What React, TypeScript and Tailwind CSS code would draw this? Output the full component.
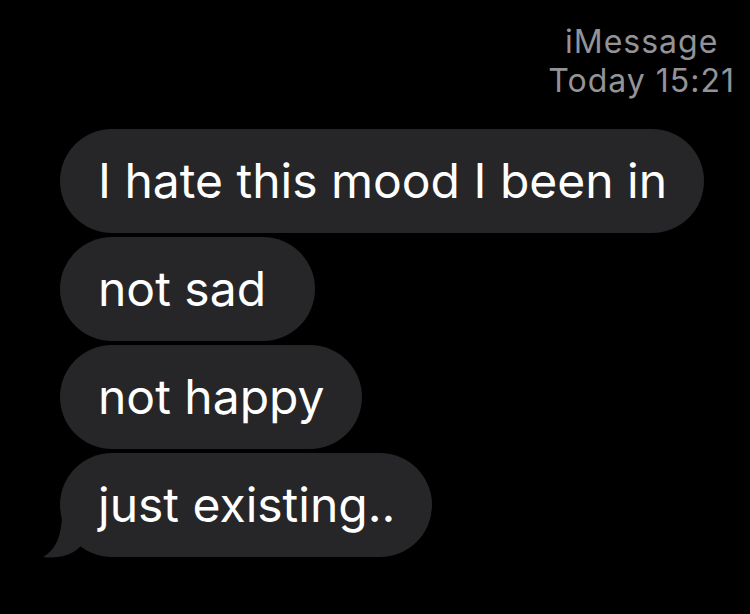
import React from 'react';

const messages = ['I hate this mood I been in', 'not sad', 'not happy', 'just existing..'];

function Tail() {
  return (
    <svg
      className="absolute left-0 top-0 overflow-visible"
      width="1"
      height="1"
      viewBox="0 0 1 1"
    >
      <path d="M2 60 C2 82 -4 97 -17 104 C-2 106 12 102 20 94 L52 53 Z" fill="#262628" />
    </svg>
  );
}

export default function App() {
  return (
    <div className="w-[750px] h-[614px] bg-black overflow-hidden font-['Inter',sans-serif]">
      <div className="flex justify-end pr-[15px] pt-[22px]">
        <div className="text-center text-[32px] leading-[39px] tracking-[1px] text-[#939398]">
          <div>iMessage</div>
          <div>Today 15:21</div>
        </div>
      </div>

      <div className="flex flex-col items-start gap-[4px] pl-[60px] pt-[29px]">
        {messages.map((m, i) => (
          <div
            key={m}
            className={`relative rounded-[52px] bg-[#262628] py-6 pl-[38px] text-[48px] leading-[56px] text-white whitespace-nowrap ${
              i === 1 ? 'pr-[49px]' : 'pr-[37px]'
            }`}
          >
            {i === messages.length - 1 && <Tail />}
            <span className="relative">{m}</span>
          </div>
        ))}
      </div>
    </div>
  );
}
